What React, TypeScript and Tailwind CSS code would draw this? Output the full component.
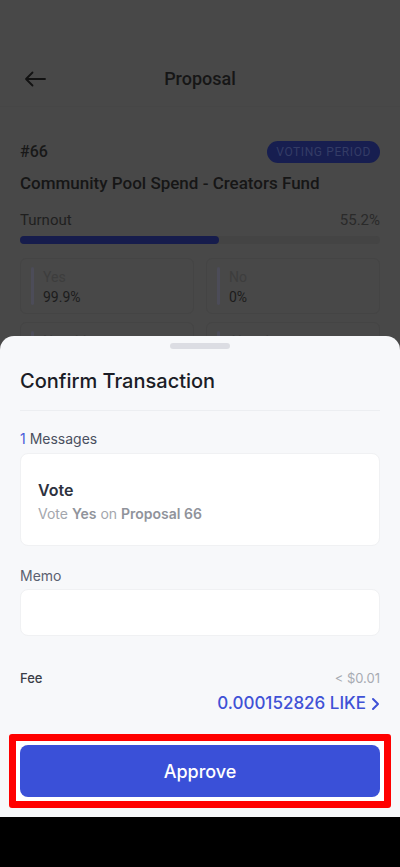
const PAGE_FONT = { fontFamily: "Roboto, 'Noto Sans', sans-serif" };
const SHEET_FONT = { fontFamily: "Inter, Roboto, sans-serif" };

const RESULTS = [
  { label: "Yes", value: "99.9%" },
  { label: "No", value: "0%" },
  { label: "No with veto", value: "0%" },
  { label: "Abstain", value: "0%" },
];

function BackArrow() {
  return (
    <svg width="22" height="16" viewBox="0 0 22 16" fill="none">
      <path
        d="M21 8H2M8.5 1.5L2 8l6.5 6.5"
        stroke="#121212"
        strokeWidth="1.8"
        strokeLinecap="round"
        strokeLinejoin="round"
      />
    </svg>
  );
}

function Chevron() {
  return (
    <svg width="9" height="14" viewBox="0 0 9 14" fill="none">
      <path
        d="M2 2l5 5-5 5"
        stroke="#3f51d6"
        strokeWidth="2"
        strokeLinecap="round"
        strokeLinejoin="round"
      />
    </svg>
  );
}

// dimmed proposal page behind the sheet
function ProposalPage() {
  return (
    <div className="flex h-full flex-col bg-[#484848]" style={PAGE_FONT}>
      <div className="h-[51px]" />
      <div className="flex h-[56px] items-center border-b border-[#464646] px-[24px]">
        <BackArrow />
        <div className="flex-1 pr-[22px] text-center text-[18px] font-medium text-[#161616]">
          Proposal
        </div>
      </div>
      <div className="flex flex-col px-[20px] pt-[34px]">
        <div className="flex h-[22px] items-center justify-between">
          <span className="text-[16px] font-medium text-[#181818]">#66</span>
          <span className="rounded-full bg-[#171e50] px-[9px] py-[2px] text-[12px] tracking-[0.6px] text-[#343c66]">
            VOTING PERIOD
          </span>
        </div>
        <div className="mt-[8px] text-[17px] font-medium leading-[24px] text-[#161616]">
          Community Pool Spend - Creators Fund
        </div>
        <div className="mt-[15px] flex items-center justify-between text-[15px] leading-[20px]">
          <span className="text-[#1f1f1f]">Turnout</span>
          <span className="text-[#2a2a2a]">55.2%</span>
        </div>
        <div className="mt-[6px] h-[8px] rounded-full bg-[#444444]">
          <div className="h-full rounded-full bg-[#161c4c]" style={{ width: "55.2%" }} />
        </div>
        <div className="mt-[14px] grid grid-cols-2 gap-x-[12px] gap-y-[8px]">
          {RESULTS.map((r) => (
            <div
              key={r.label}
              className="flex h-[56px] gap-[9px] rounded-[6px] border border-[#444444] px-[10px] py-[8px]"
            >
              <div className="w-[3px] rounded-full bg-[#4c4c58]" />
              <div className="flex flex-col text-[14px] leading-[20px]">
                <span className="text-[#3d3d3d]">{r.label}</span>
                <span className="text-[#1c1c1c]">{r.value}</span>
              </div>
            </div>
          ))}
        </div>
      </div>
    </div>
  );
}

function ConfirmSheet() {
  return (
    <div
      className="absolute inset-x-0 bottom-0 flex h-[481px] flex-col rounded-t-[14px] bg-[#f7f8fa] px-[20px] pt-[7px] pb-[9px]"
      style={SHEET_FONT}
    >
      <div className="mx-auto h-[6px] w-[60px] rounded-full bg-[#dcdde3]" />
      <div className="mt-[18px] text-[20px] font-medium leading-[28px] text-[#1b1d26]">
        Confirm Transaction
      </div>
      <div className="mt-[15px] border-t border-[#eceef1]" />
      <div className="mt-[18px] text-[14px] leading-[20px] text-[#4a5060]">
        <span className="text-[#4a5ad9]">1</span> Messages
      </div>
      <div className="mt-[4px] flex h-[93px] flex-col rounded-[8px] border border-[#f0f1f3] bg-white px-[17px] pt-[24px]">
        <div className="text-[16px] font-semibold leading-[24px] text-[#2d3240]">Vote</div>
        <div className="mt-[2px] text-[14px] leading-[20px] text-[#a3a6ad]">
          Vote <span className="font-semibold text-[#90939b]">Yes</span> on{" "}
          <span className="font-semibold text-[#90939b]">Proposal 66</span>
        </div>
      </div>
      <div className="mt-[20px] text-[14px] leading-[20px] text-[#5a6070]">Memo</div>
      <div className="mt-[3px] h-[47px] rounded-[8px] border border-[#f0f1f3] bg-white" />
      <div className="mt-[32px] flex items-center justify-between text-[13px] leading-[20px]">
        <span className="font-medium text-[#3a3d47]">Fee</span>
        <span className="text-[#a8abb2]">&lt; $0.01</span>
      </div>
      <div className="mt-[4px] flex h-[24px] items-center justify-end gap-[5px] text-[17px] font-medium text-[#3f51d6]">
        0.000152826 LIKE
        <Chevron />
      </div>
      <div className="-mx-[11px] mt-[18px] rounded-[3px] border-[7px] border-[#ff0000] bg-white p-[4px]">
        <button className="flex h-[52px] w-full items-center justify-center rounded-[8px] bg-[#3a50d8] text-[18px] font-medium text-white">
          Approve
        </button>
      </div>
    </div>
  );
}

export default function App() {
  return (
    <div className="flex h-[867px] w-[400px] flex-col overflow-hidden bg-black">
      <div className="relative h-[817px]">
        <ProposalPage />
        <ConfirmSheet />
      </div>
      <div className="h-[50px] bg-black" />
    </div>
  );
}
